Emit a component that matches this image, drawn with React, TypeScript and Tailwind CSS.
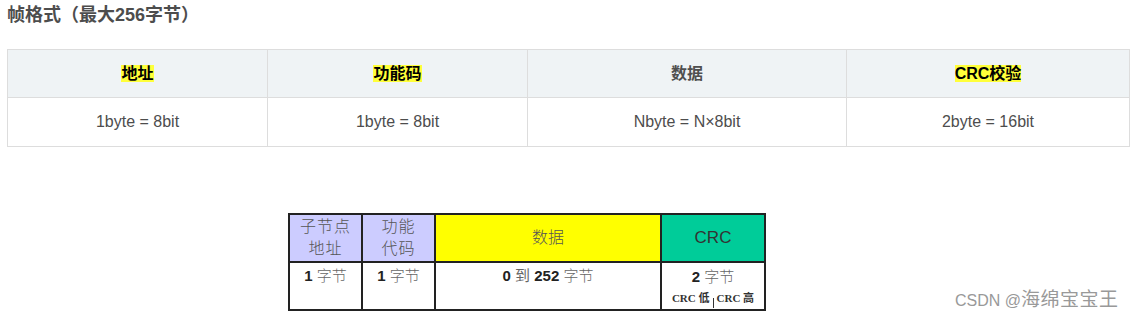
const sans = { fontFamily: '"Liberation Sans", "Noto Sans CJK SC", sans-serif' };

const Mark = ({ children }: { children: React.ReactNode }) => (
  <span className="bg-[#ffff3a] text-black">{children}</span>
);

const FrameTable = () => {
  const heads: React.ReactNode[] = [
    <Mark>地址</Mark>,
    <Mark>功能码</Mark>,
    <span>数据</span>,
    <Mark>CRC校验</Mark>,
  ];
  const cells = ["1byte = 8bit", "1byte = 8bit", "Nbyte = N×8bit", "2byte = 16bit"];
  return (
    <table className="ml-[7px] mt-[22px] border-collapse table-fixed w-[1122px] text-[16px] text-[#4d4d4d]">
      <colgroup>
        <col className="w-[260px]" />
        <col className="w-[260px]" />
        <col className="w-[319px]" />
        <col className="w-[283px]" />
      </colgroup>
      <thead>
        <tr className="bg-[#eff3f5] h-[48px]">
          {heads.map((h, i) => (
            <th key={i} className="border border-[#dddddd] font-bold text-center p-0 text-[#4f4f4f]">
              {h}
            </th>
          ))}
        </tr>
      </thead>
      <tbody>
        <tr className="h-[49px]">
          {cells.map((c, i) => (
            <td key={i} className="border border-[#dddddd] text-center p-0">
              {c}
            </td>
          ))}
        </tr>
      </tbody>
    </table>
  );
};

const Bytes = ({ n }: { n: string }) => (
  <span>
    <b className="text-[#222]">{n}</b> <span className="text-[#666] font-light">字节</span>
  </span>
);

const ModbusTable = () => (
  <table className="ml-[288px] mt-[66px] border-collapse table-fixed w-[476px] text-[15px]">
    <colgroup>
      <col className="w-[73px]" />
      <col className="w-[73px]" />
      <col className="w-[226px]" />
      <col className="w-[104px]" />
    </colgroup>
    <tbody>
      <tr className="h-[48px] text-[#555]">
        <td className="border-2 border-[#222] bg-[#ccccff] text-center leading-[22px] p-0 font-light text-[16px] tracking-[1px]">
          子节点
          <br />
          地址
        </td>
        <td className="border-2 border-[#222] bg-[#ccccff] text-center leading-[22px] p-0 font-light text-[16px] tracking-[1px]">
          功能
          <br />
          代码
        </td>
        <td className="border-2 border-[#222] bg-[#ffff00] text-center p-0 font-light text-[16px]">数据</td>
        <td className="border-2 border-[#222] bg-[#00cc99] text-center p-0 text-[17px] text-[#333]" style={sans}>
          CRC
        </td>
      </tr>
      <tr className="h-[48px] align-top">
        <td className="border-2 border-[#222] text-center p-0 pt-[2px]">
          <Bytes n="1" />
        </td>
        <td className="border-2 border-[#222] text-center p-0 pt-[2px]">
          <Bytes n="1" />
        </td>
        <td className="border-2 border-[#222] text-center p-0 pt-[2px]">
          <b className="text-[#222]">0</b> <span className="text-[#666]">到</span>{" "}
          <b className="text-[#222]">252</b> <span className="text-[#666] font-light">字节</span>
        </td>
        <td className="border-2 border-[#222] text-center p-0 pt-[3px] align-top">
          <div className="flex flex-col items-center">
            <Bytes n="2" />
            <div className="flex items-end mt-[2px] text-[11px] font-bold text-[#333] leading-[14px]" style={{ fontFamily: '"Liberation Serif", "Noto Sans CJK SC", serif' }}>
              <span>CRC 低</span>
              <span className="w-[1px] h-[10px] bg-[#333] mx-[3px] translate-y-[3px]" />
              <span>CRC 高</span>
            </div>
          </div>
        </td>
      </tr>
    </tbody>
  </table>
);

export default function App() {
  return (
    <div className="relative w-[1141px] h-[320px] bg-white overflow-hidden" style={sans}>
      <h4 className="ml-[7px] pt-[3px] text-[18px] leading-[24px] font-bold text-[#4d4d4d]">帧格式（最大256字节）</h4>
      <FrameTable />
      <ModbusTable />
      <div className="absolute left-[955px] top-[288px] text-[#999] leading-[24px] whitespace-nowrap">
        <span className="text-[16px]">CSDN @</span>
        <span className="text-[19px] tracking-[0.5px]">海绵宝宝王</span>
      </div>
    </div>
  );
}
